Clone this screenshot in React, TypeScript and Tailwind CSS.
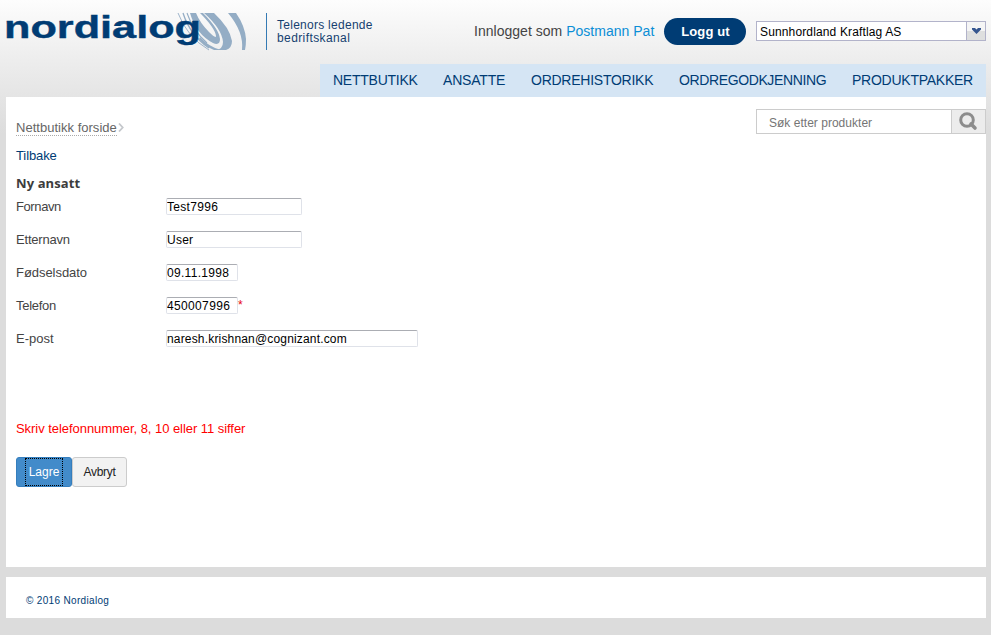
import React from "react";

const navItems = [
  { label: "NETTBUTIKK", width: "w-[84px]", spacing: "tracking-[-0.25px]" },
  { label: "ANSATTE", width: "w-[62px]", spacing: "tracking-[-0.2px]" },
  { label: "ORDREHISTORIKK", width: "w-[122px]", spacing: "tracking-[-0.25px]" },
  { label: "ORDREGODKJENNING", width: "w-[147px]", spacing: "tracking-[-0.38px]" },
  { label: "PRODUKTPAKKER", width: "w-[121px]", spacing: "tracking-[-0.25px]" },
];

const fields = [
  { label: "Fornavn", value: "Test7996", width: "w-[136px]", spacing: "tracking-[0.3px]", labelSpacing: "tracking-[-0.4px]" },
  { label: "Etternavn", value: "User", width: "w-[136px]", spacing: "tracking-[0.25px]", labelSpacing: "tracking-[-0.2px]" },
  { label: "Fødselsdato", value: "09.11.1998", width: "w-[72px]", spacing: "tracking-[0.3px]", labelSpacing: "tracking-[-0.05px]" },
  { label: "Telefon", value: "450007996", width: "w-[72px]", spacing: "tracking-[0.35px]", labelSpacing: "tracking-[-0.3px]", required: true },
  { label: "E-post", value: "naresh.krishnan@cognizant.com", width: "w-[252px]", spacing: "tracking-[0.17px]", labelSpacing: "tracking-[0px]" },
];

function Logo() {
  return (
    <svg width="246" height="56" viewBox="0 0 246 56" className="block shrink-0">
      <g fill="#94adc5">
        <path d="M228 13H236Q245 26 246 39Q246 46 245 50H242Q244 32 228 13Z" />
        <path d="M204 13H214Q230 28 232 41Q232 48 226 50H216Q223 49 223 42Q222 29 204 13Z" />
        <path d="M190 13H196Q200 23 209 32Q216 39 216 36Q215 28 200 13H203Q219 29 220 39Q220 46 213 43Q196 34 190 13Z" />
        <path d="M200 37Q209 47 221 50H214Q206 47 199 39Z" />
      </g>
      <g fill="none" stroke="#94adc5">
        <path d="M183 13Q190 35 209 48" strokeWidth="1.3" />
        <path d="M178 13Q187 37 209 50" strokeWidth="0.9" />
        <path d="M187 13Q193 31 207 43" strokeWidth="1.1" />
      </g>
      <text x="4" y="38" fill="#003c74" stroke="#003c74" strokeWidth="0.4" fontSize="31" fontWeight="700" fontFamily="Liberation Sans, Arial, sans-serif" textLength="197" lengthAdjust="spacingAndGlyphs">nordialog</text>
    </svg>
  );
}

function Header() {
  return (
    <header className="h-[97px]">
      <div className="flex h-16 items-start">
        <Logo />
        <div className="mt-[13px] ml-5 h-[37px] w-px bg-[#347ab4]" />
        <div className="mt-[19px] ml-[10px] w-[196px] text-[12px] leading-[13px] whitespace-nowrap text-[#163f70]">
          <div className="tracking-[0.27px]">Telenors ledende</div>
          <div className="tracking-[0.4px]">bedriftskanal</div>
        </div>
        <div className="mt-[21px] ml-px w-[190px] text-[14px] leading-5 tracking-[0.02px] whitespace-nowrap text-[#444]">
          Innlogget som <a className="text-[#0b8ed6]">Postmann Pat</a>
        </div>
        <button className="mt-[18px] h-[27px] w-[82px] rounded-full bg-[#003c74] pt-px pl-px text-[13px] font-bold tracking-[0.15px] text-white">Logg ut</button>
        <div className="mt-[21px] ml-[10px] flex h-5 w-[230px] border border-[#b2b3ca] bg-white">
          <span className="flex-1 pt-px pl-[3px] text-[12px] leading-[19px] tracking-[0.14px] whitespace-nowrap text-black">Sunnhordland Kraftlag AS</span>
          <span className="flex w-[19px] items-center justify-center border-l border-[#b2b3ca] bg-linear-to-b from-[#f5f5f5] from-50% to-[#dedfdf] to-50%">
            <svg width="9" height="6" viewBox="0 0 9 6"><path d="M0 0H3L4.5 1.5L6 0H9V1.5L4.5 6L0 1.5Z" fill="#35568f" /></svg>
          </span>
        </div>
      </div>
      <nav className="mr-[5px] ml-[320px] flex h-[33px] gap-[26px] bg-[#d5e5f4] pl-[13px] text-[14px] leading-8 text-[#003c74]">
        {navItems.map((item) => (
          <a key={item.label} className={`${item.width} ${item.spacing} whitespace-nowrap`}>{item.label}</a>
        ))}
      </nav>
    </header>
  );
}

function Search() {
  return (
    <div className="mt-3 flex h-[25px] w-[230px] border border-[#ccc]">
      <span className="w-[195px] border-r border-[#ccc] pt-px pl-3 text-[12px] leading-[25px] tracking-[0.02px] text-[#757575]">Søk etter produkter</span>
      <span className="flex flex-1 items-center justify-center bg-[#ececec]">
        <svg width="19" height="19" viewBox="0 0 19 19" fill="none" stroke="#8c8c8c">
          <circle cx="8" cy="8" r="6.3" strokeWidth="3" />
          <path d="M12 12L16 16" strokeWidth="3.6" strokeLinecap="round" />
        </svg>
      </span>
    </div>
  );
}

export default function App() {
  return (
    <div className="h-[635px] w-[991px] overflow-hidden bg-[#dcdcdc] bg-[linear-gradient(#fdfdfd_0px,#eeeeee_56px,#dcdcdc_134px)] font-['Liberation_Sans',Arial,sans-serif]">
      <Header />
      <main className="mr-[5px] ml-[6px] h-[470px] bg-white pl-[10px] text-[13px] text-[#444]">
        <div className="flex h-[52px] items-start justify-between">
          <div className="mt-[22px] flex h-[17px]">
            <a className="h-[17px] w-[101px] border-b border-dotted border-[#aaa] leading-[17px] tracking-[0.02px] whitespace-nowrap text-[#666]">Nettbutikk forside</a>
            <svg className="mt-1 ml-px" width="6" height="9" viewBox="0 0 6 9"><path d="M1 .5L4.7 4.5L1 8.5" fill="none" stroke="#c5c8cc" strokeWidth="1.8" /></svg>
          </div>
          <Search />
        </div>
        <a className="block h-[26px] leading-[14px] tracking-[-0.1px] text-[#003c74]">Tilbake</a>
        <h1 className="h-[23px] font-['Open_Sans',sans-serif] text-[13px] leading-4 font-bold tracking-[0.1px] text-[#3c3c3c]">Ny ansatt</h1>
        <form>
          {fields.map((field) => (
            <div key={field.label} className="flex h-[33px] items-start">
              <label className={`w-[150px] leading-[17px] ${field.labelSpacing}`}>{field.label}</label>
              <input readOnly value={field.value} className={`${field.width} ${field.spacing} h-[17px] rounded-[2px] border border-[#dfe2e9] border-t-[#abadb3] bg-white px-0 py-0 text-[12px] leading-[15px] text-black outline-none`} />
              {field.required && <span className="leading-[17px] text-[12px] text-red-600">*</span>}
            </div>
          ))}
          <p className="mt-[57px] h-[37px] leading-[17px] tracking-[-0.05px] text-[#f00]">Skriv telefonnummer, 8, 10 eller 11 siffer</p>
          <div className="flex h-[30px] text-[12px]">
            <button type="button" className="flex w-14 items-center justify-center rounded-[3px] border border-[#357ebd] bg-[#428bca] text-white">
              <span className="flex h-7 w-[38px] items-center justify-center border border-dotted border-black">Lagre</span>
            </button>
            <button type="button" className="w-[55px] rounded-[3px] border border-[#ccc] bg-[#f2f2f2] text-[#222] tracking-[-0.3px]">Avbryt</button>
          </div>
        </form>
      </main>
      <footer className="mt-[10px] mr-[5px] ml-[6px] h-[41px] bg-white pl-5 text-[10px] leading-[48px] tracking-[0.33px] text-[#003c74]">© 2016 Nordialog</footer>
    </div>
  );
}
